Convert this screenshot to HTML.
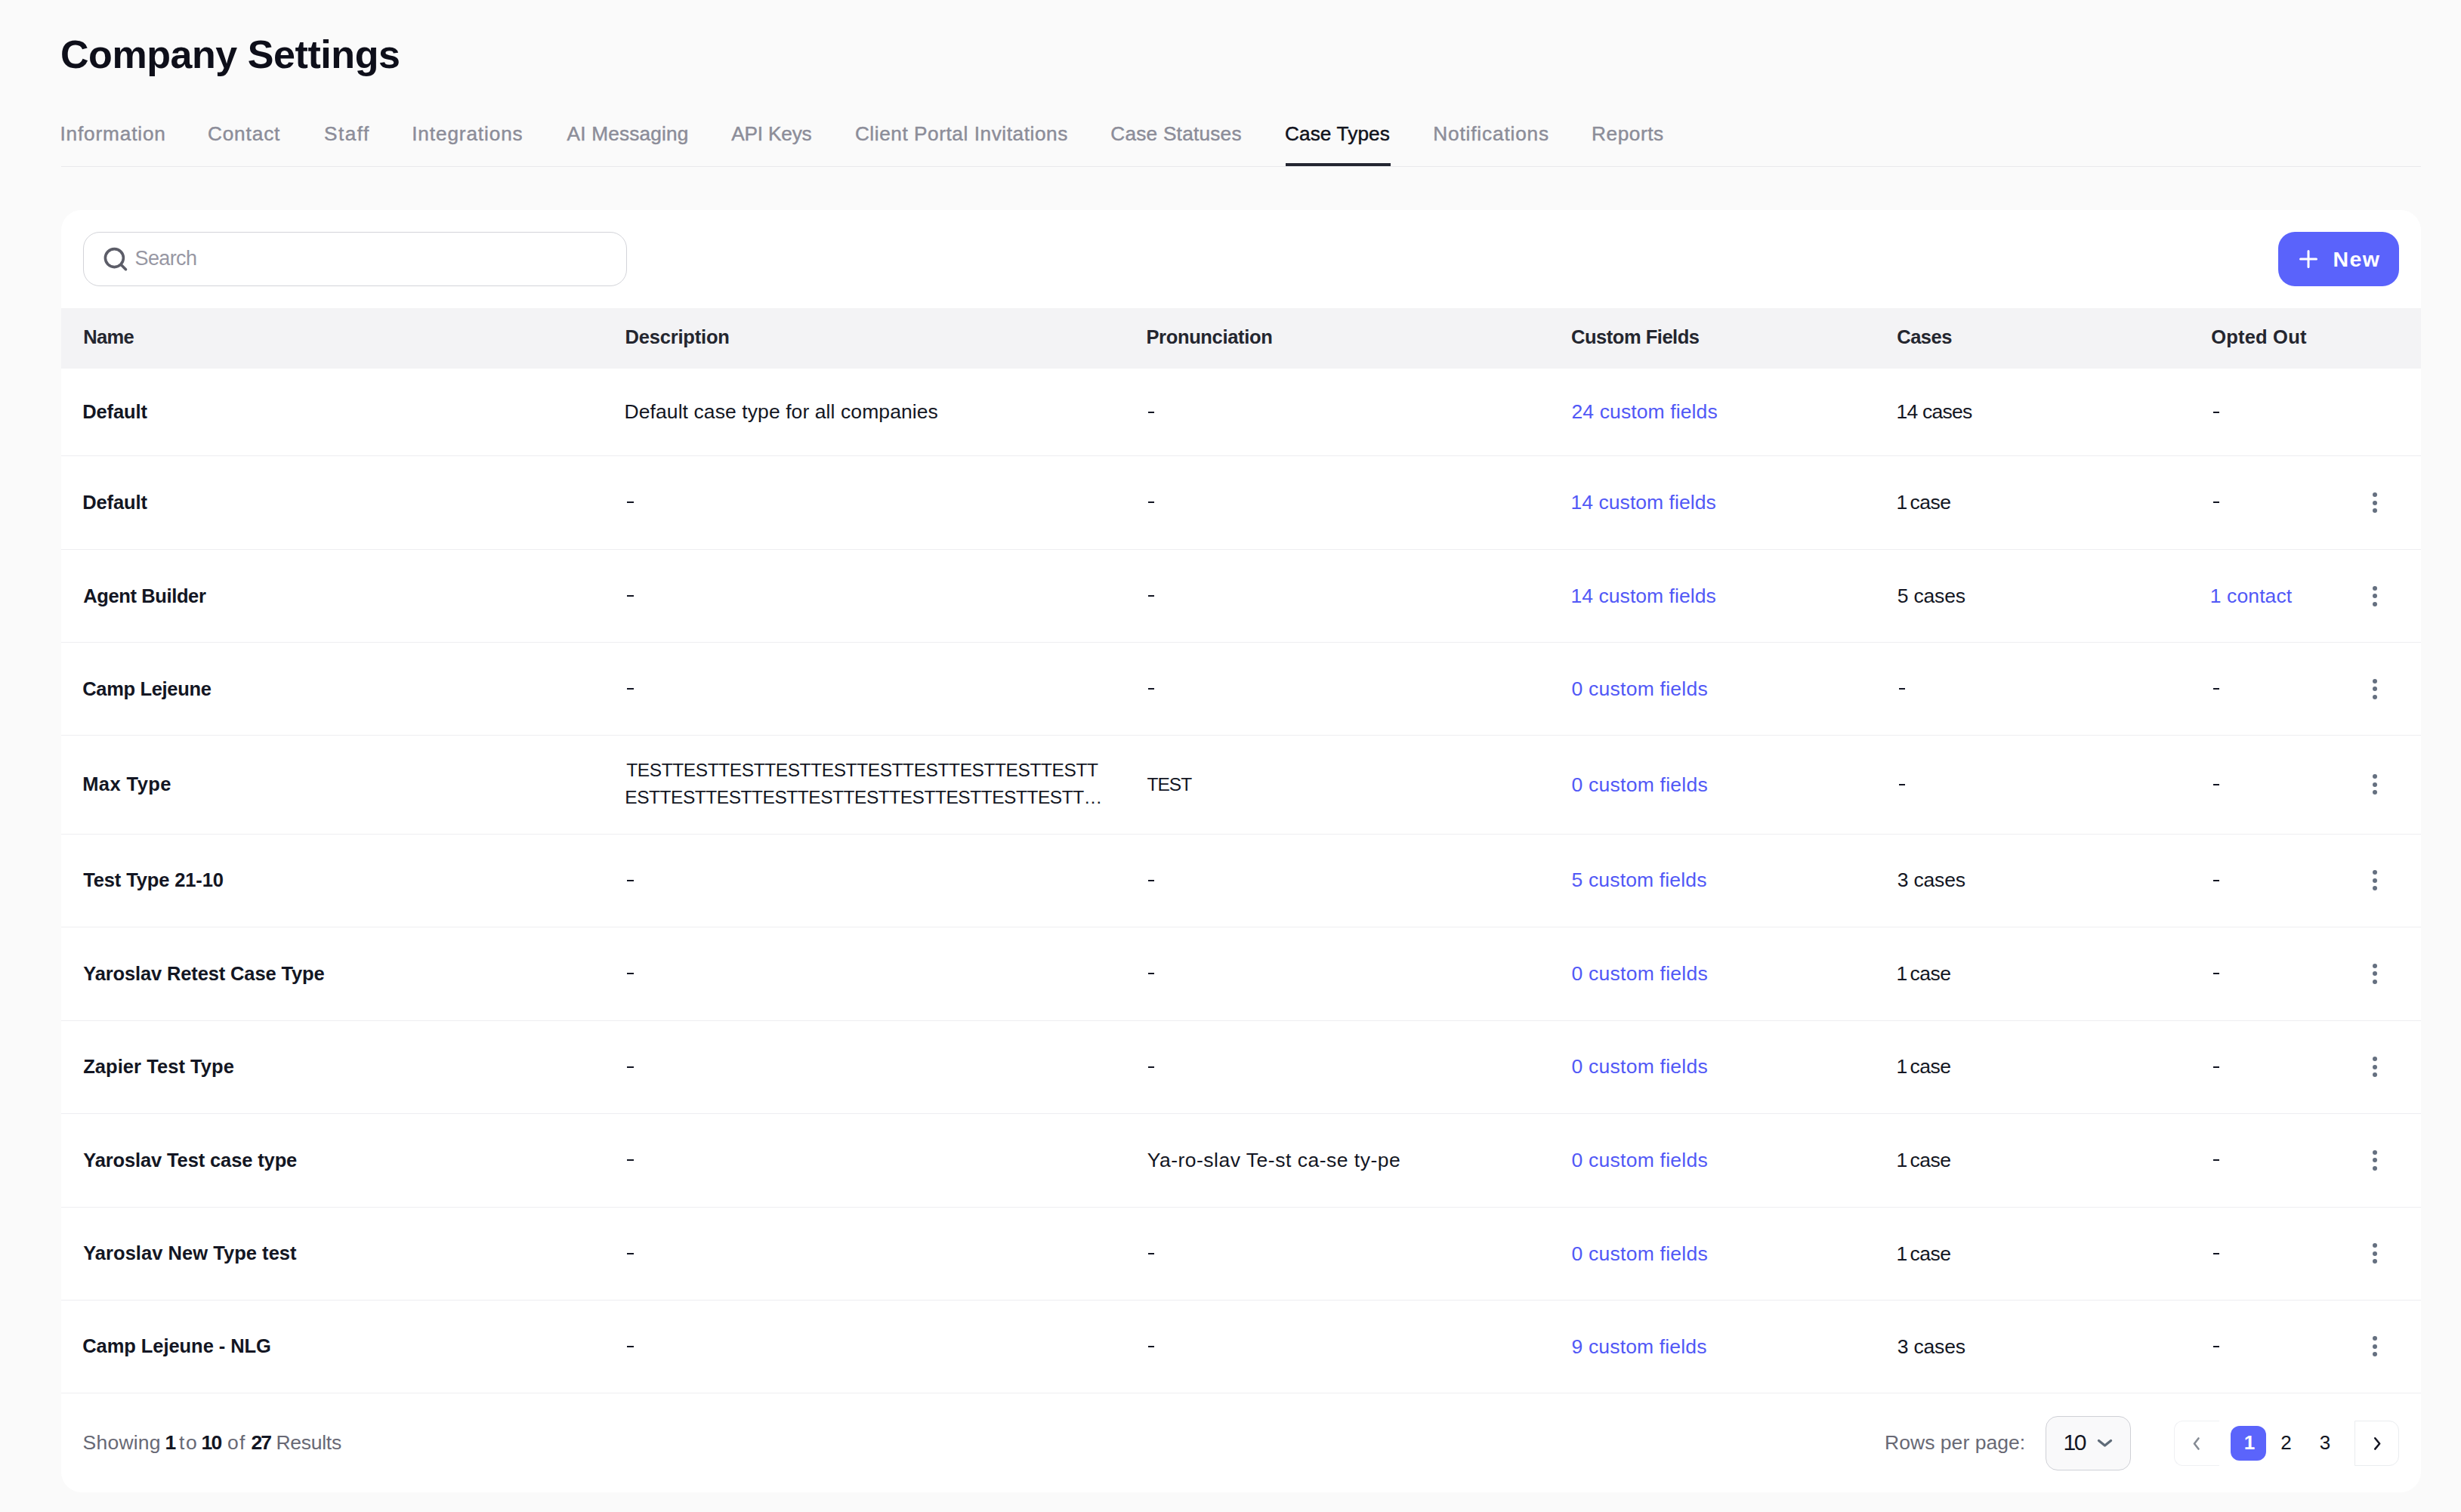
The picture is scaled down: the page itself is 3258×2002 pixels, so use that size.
<!DOCTYPE html>
<html><head><meta charset="utf-8"><title>Company Settings</title>
<style>
html,body{margin:0;padding:0;}
body{width:3258px;height:2002px;background:#fafafa;position:relative;overflow:hidden;font-family:"Liberation Sans", sans-serif;}
.t{position:absolute;white-space:nowrap;}
</style></head><body>
<div style="position:absolute;left:81px;top:220px;width:3124px;height:1px;background:#e9e9ec"></div>
<div style="position:absolute;left:1702px;top:216px;width:139px;height:4px;background:#232631"></div>
<div style="position:absolute;left:81px;top:278px;width:3124px;height:1698px;background:#fff;border-radius:27px;"></div>
<div style="position:absolute;left:110px;top:307px;width:718px;height:70px;border:1px solid #d3d4d9;border-radius:22px;background:#fff"></div>
<svg style="position:absolute;left:136px;top:326px" width="34" height="34" viewBox="0 0 34 34"><circle cx="15.4" cy="15.6" r="12" fill="none" stroke="#5c5d68" stroke-width="3.6"/><line x1="24.5" y1="24.7" x2="30.5" y2="30.7" stroke="#5c5d68" stroke-width="3.6" stroke-linecap="round"/></svg>
<div style="position:absolute;left:3016px;top:307px;width:160px;height:72px;border-radius:22px;background:#5a63fb"></div>
<svg style="position:absolute;left:3044px;top:331px" width="24" height="24" viewBox="0 0 24 24"><path d="M12 1.5V22.5M1.5 12H22.5" stroke="#fff" stroke-width="3" stroke-linecap="round"/></svg>
<div style="position:absolute;left:81px;top:408px;width:3124px;height:80px;background:#f3f3f5"></div>
<div style="position:absolute;left:1519.5px;top:544.6px;width:8.5px;height:2px;background:#131623"></div>
<div style="position:absolute;left:2930px;top:544.6px;width:8px;height:2px;background:#131623"></div>
<div style="position:absolute;left:81px;top:602.9px;width:3124px;height:1px;background:#eeeef1"></div>
<div style="position:absolute;left:830px;top:664.4px;width:8.5px;height:2px;background:#131623"></div>
<div style="position:absolute;left:1519.5px;top:664.4px;width:8.5px;height:2px;background:#131623"></div>
<div style="position:absolute;left:2930px;top:664.4px;width:8px;height:2px;background:#131623"></div>
<div style="position:absolute;left:3141px;top:652.0px;width:6px;height:6px;border-radius:3px;background:#657080"></div>
<div style="position:absolute;left:3141px;top:662.5px;width:6px;height:6px;border-radius:3px;background:#657080"></div>
<div style="position:absolute;left:3141px;top:672.9px;width:6px;height:6px;border-radius:3px;background:#657080"></div>
<div style="position:absolute;left:81px;top:727.0px;width:3124px;height:1px;background:#eeeef1"></div>
<div style="position:absolute;left:830px;top:787.9px;width:8.5px;height:2px;background:#131623"></div>
<div style="position:absolute;left:1519.5px;top:787.9px;width:8.5px;height:2px;background:#131623"></div>
<div style="position:absolute;left:3141px;top:775.6px;width:6px;height:6px;border-radius:3px;background:#657080"></div>
<div style="position:absolute;left:3141px;top:786.0px;width:6px;height:6px;border-radius:3px;background:#657080"></div>
<div style="position:absolute;left:3141px;top:796.5px;width:6px;height:6px;border-radius:3px;background:#657080"></div>
<div style="position:absolute;left:81px;top:850.1px;width:3124px;height:1px;background:#eeeef1"></div>
<div style="position:absolute;left:830px;top:910.9px;width:8.5px;height:2px;background:#131623"></div>
<div style="position:absolute;left:1519.5px;top:910.9px;width:8.5px;height:2px;background:#131623"></div>
<div style="position:absolute;left:2513.8px;top:910.9px;width:8.5px;height:2px;background:#131623"></div>
<div style="position:absolute;left:2930px;top:910.9px;width:8px;height:2px;background:#131623"></div>
<div style="position:absolute;left:3141px;top:898.6px;width:6px;height:6px;border-radius:3px;background:#657080"></div>
<div style="position:absolute;left:3141px;top:909.0px;width:6px;height:6px;border-radius:3px;background:#657080"></div>
<div style="position:absolute;left:3141px;top:919.5px;width:6px;height:6px;border-radius:3px;background:#657080"></div>
<div style="position:absolute;left:81px;top:973.0px;width:3124px;height:1px;background:#eeeef1"></div>
<div style="position:absolute;left:2513.8px;top:1037.8px;width:8.5px;height:2px;background:#131623"></div>
<div style="position:absolute;left:2930px;top:1037.8px;width:8px;height:2px;background:#131623"></div>
<div style="position:absolute;left:3141px;top:1025.4px;width:6px;height:6px;border-radius:3px;background:#657080"></div>
<div style="position:absolute;left:3141px;top:1035.8px;width:6px;height:6px;border-radius:3px;background:#657080"></div>
<div style="position:absolute;left:3141px;top:1046.3px;width:6px;height:6px;border-radius:3px;background:#657080"></div>
<div style="position:absolute;left:81px;top:1103.7px;width:3124px;height:1px;background:#eeeef1"></div>
<div style="position:absolute;left:830px;top:1164.7px;width:8.5px;height:2px;background:#131623"></div>
<div style="position:absolute;left:1519.5px;top:1164.7px;width:8.5px;height:2px;background:#131623"></div>
<div style="position:absolute;left:2930px;top:1164.7px;width:8px;height:2px;background:#131623"></div>
<div style="position:absolute;left:3141px;top:1152.3px;width:6px;height:6px;border-radius:3px;background:#657080"></div>
<div style="position:absolute;left:3141px;top:1162.8px;width:6px;height:6px;border-radius:3px;background:#657080"></div>
<div style="position:absolute;left:3141px;top:1173.2px;width:6px;height:6px;border-radius:3px;background:#657080"></div>
<div style="position:absolute;left:81px;top:1226.8px;width:3124px;height:1px;background:#eeeef1"></div>
<div style="position:absolute;left:830px;top:1288.2px;width:8.5px;height:2px;background:#131623"></div>
<div style="position:absolute;left:1519.5px;top:1288.2px;width:8.5px;height:2px;background:#131623"></div>
<div style="position:absolute;left:2930px;top:1288.2px;width:8px;height:2px;background:#131623"></div>
<div style="position:absolute;left:3141px;top:1275.8px;width:6px;height:6px;border-radius:3px;background:#657080"></div>
<div style="position:absolute;left:3141px;top:1286.3px;width:6px;height:6px;border-radius:3px;background:#657080"></div>
<div style="position:absolute;left:3141px;top:1296.8px;width:6px;height:6px;border-radius:3px;background:#657080"></div>
<div style="position:absolute;left:81px;top:1350.8px;width:3124px;height:1px;background:#eeeef1"></div>
<div style="position:absolute;left:830px;top:1411.6px;width:8.5px;height:2px;background:#131623"></div>
<div style="position:absolute;left:1519.5px;top:1411.6px;width:8.5px;height:2px;background:#131623"></div>
<div style="position:absolute;left:2930px;top:1411.6px;width:8px;height:2px;background:#131623"></div>
<div style="position:absolute;left:3141px;top:1399.2px;width:6px;height:6px;border-radius:3px;background:#657080"></div>
<div style="position:absolute;left:3141px;top:1409.7px;width:6px;height:6px;border-radius:3px;background:#657080"></div>
<div style="position:absolute;left:3141px;top:1420.1px;width:6px;height:6px;border-radius:3px;background:#657080"></div>
<div style="position:absolute;left:81px;top:1473.6px;width:3124px;height:1px;background:#eeeef1"></div>
<div style="position:absolute;left:830px;top:1535.1px;width:8.5px;height:2px;background:#131623"></div>
<div style="position:absolute;left:2930px;top:1535.1px;width:8px;height:2px;background:#131623"></div>
<div style="position:absolute;left:3141px;top:1522.7px;width:6px;height:6px;border-radius:3px;background:#657080"></div>
<div style="position:absolute;left:3141px;top:1533.2px;width:6px;height:6px;border-radius:3px;background:#657080"></div>
<div style="position:absolute;left:3141px;top:1543.6px;width:6px;height:6px;border-radius:3px;background:#657080"></div>
<div style="position:absolute;left:81px;top:1597.7px;width:3124px;height:1px;background:#eeeef1"></div>
<div style="position:absolute;left:830px;top:1658.8px;width:8.5px;height:2px;background:#131623"></div>
<div style="position:absolute;left:1519.5px;top:1658.8px;width:8.5px;height:2px;background:#131623"></div>
<div style="position:absolute;left:2930px;top:1658.8px;width:8px;height:2px;background:#131623"></div>
<div style="position:absolute;left:3141px;top:1646.4px;width:6px;height:6px;border-radius:3px;background:#657080"></div>
<div style="position:absolute;left:3141px;top:1656.8px;width:6px;height:6px;border-radius:3px;background:#657080"></div>
<div style="position:absolute;left:3141px;top:1667.3px;width:6px;height:6px;border-radius:3px;background:#657080"></div>
<div style="position:absolute;left:81px;top:1721.0px;width:3124px;height:1px;background:#eeeef1"></div>
<div style="position:absolute;left:830px;top:1781.8px;width:8.5px;height:2px;background:#131623"></div>
<div style="position:absolute;left:1519.5px;top:1781.8px;width:8.5px;height:2px;background:#131623"></div>
<div style="position:absolute;left:2930px;top:1781.8px;width:8px;height:2px;background:#131623"></div>
<div style="position:absolute;left:3141px;top:1769.4px;width:6px;height:6px;border-radius:3px;background:#657080"></div>
<div style="position:absolute;left:3141px;top:1779.8px;width:6px;height:6px;border-radius:3px;background:#657080"></div>
<div style="position:absolute;left:3141px;top:1790.3px;width:6px;height:6px;border-radius:3px;background:#657080"></div>
<div style="position:absolute;left:81px;top:1843.7px;width:3124px;height:1px;background:#eeeef1"></div>
<div style="position:absolute;left:2708px;top:1875px;width:111px;height:70px;border:1px solid #cfd0d6;border-radius:16px;background:#f9f9fa"></div>
<svg style="position:absolute;left:2775px;top:1905px" width="22" height="13" viewBox="0 0 22 13"><path d="M3.5 2.5L11.5 9L19.5 2.5" fill="none" stroke="#5f6b78" stroke-width="3.2" stroke-linecap="round" stroke-linejoin="round"/></svg>
<div style="position:absolute;left:2878px;top:1881px;width:59px;height:58px;border:1px solid #eff0f3;border-right:none;border-radius:12px 0 0 12px"></div>
<svg style="position:absolute;left:2900px;top:1901px" width="16" height="21" viewBox="0 0 16 21"><path d="M10.5 3.5L5 10.5L10.5 17.5" fill="none" stroke="#858b94" stroke-width="2.6" stroke-linecap="round" stroke-linejoin="round"/></svg>
<div style="position:absolute;left:2953px;top:1888px;width:47px;height:46px;border-radius:12px;background:#5b64fb"></div>
<div style="position:absolute;left:3117px;top:1881px;width:57px;height:58px;border:1px solid #eaecef;border-radius:0 13px 13px 0"></div>
<svg style="position:absolute;left:3139px;top:1901px" width="16" height="21" viewBox="0 0 16 21"><path d="M5.2 3.3L11.2 10.5L5.2 17.6" fill="none" stroke="#141522" stroke-width="2.5" stroke-linecap="round" stroke-linejoin="round"/></svg>
<div class="t" style="left:80.00px;top:45.98px;font-size:52px;line-height:52px;color:#0e0f1a;font-weight:700;letter-spacing:-0.439px;">Company Settings</div>
<div class="t" style="left:79.50px;top:164.02px;font-size:26.2px;line-height:26.2px;color:#8c8d99;font-weight:400;letter-spacing:0.836px;-webkit-text-stroke:0.45px currentColor;">Information</div>
<div class="t" style="left:274.90px;top:164.02px;font-size:26.2px;line-height:26.2px;color:#8c8d99;font-weight:400;letter-spacing:0.871px;-webkit-text-stroke:0.45px currentColor;">Contact</div>
<div class="t" style="left:429.10px;top:164.02px;font-size:26.2px;line-height:26.2px;color:#8c8d99;font-weight:400;letter-spacing:1.473px;-webkit-text-stroke:0.45px currentColor;">Staff</div>
<div class="t" style="left:545.20px;top:164.02px;font-size:26.2px;line-height:26.2px;color:#8c8d99;font-weight:400;letter-spacing:0.877px;-webkit-text-stroke:0.45px currentColor;">Integrations</div>
<div class="t" style="left:750.60px;top:164.02px;font-size:26.2px;line-height:26.2px;color:#8c8d99;font-weight:400;letter-spacing:0.182px;-webkit-text-stroke:0.45px currentColor;">AI Messaging</div>
<div class="t" style="left:968.20px;top:164.02px;font-size:26.2px;line-height:26.2px;color:#8c8d99;font-weight:400;letter-spacing:-0.173px;-webkit-text-stroke:0.45px currentColor;">API Keys</div>
<div class="t" style="left:1131.90px;top:164.02px;font-size:26.2px;line-height:26.2px;color:#8c8d99;font-weight:400;letter-spacing:0.566px;-webkit-text-stroke:0.45px currentColor;">Client Portal Invitations</div>
<div class="t" style="left:1470.30px;top:164.02px;font-size:26.2px;line-height:26.2px;color:#8c8d99;font-weight:400;letter-spacing:0.240px;-webkit-text-stroke:0.45px currentColor;">Case Statuses</div>
<div class="t" style="left:1700.90px;top:164.02px;font-size:26.2px;line-height:26.2px;color:#11121c;font-weight:400;letter-spacing:0.135px;-webkit-text-stroke:0.45px currentColor;">Case Types</div>
<div class="t" style="left:1897.30px;top:164.02px;font-size:26.2px;line-height:26.2px;color:#8c8d99;font-weight:400;letter-spacing:0.846px;-webkit-text-stroke:0.45px currentColor;">Notifications</div>
<div class="t" style="left:2107.00px;top:164.02px;font-size:26.2px;line-height:26.2px;color:#8c8d99;font-weight:400;letter-spacing:0.583px;-webkit-text-stroke:0.45px currentColor;">Reports</div>
<div class="t" style="left:178.50px;top:328.64px;font-size:27px;line-height:27px;color:#9797a3;font-weight:400;letter-spacing:-0.606px;">Search</div>
<div class="t" style="left:3088.60px;top:328.87px;font-size:28.5px;line-height:28.5px;color:#ffffff;font-weight:700;letter-spacing:1.384px;">New</div>
<div class="t" style="left:110.20px;top:434.41px;font-size:25.5px;line-height:25.5px;color:#24262f;font-weight:700;letter-spacing:-0.690px;">Name</div>
<div class="t" style="left:827.50px;top:434.41px;font-size:25.5px;line-height:25.5px;color:#24262f;font-weight:700;letter-spacing:-0.190px;">Description</div>
<div class="t" style="left:1517.40px;top:434.41px;font-size:25.5px;line-height:25.5px;color:#24262f;font-weight:700;letter-spacing:-0.337px;">Pronunciation</div>
<div class="t" style="left:2080.10px;top:434.41px;font-size:25.5px;line-height:25.5px;color:#24262f;font-weight:700;letter-spacing:-0.484px;">Custom Fields</div>
<div class="t" style="left:2511.30px;top:434.41px;font-size:25.5px;line-height:25.5px;color:#24262f;font-weight:700;letter-spacing:-0.515px;">Cases</div>
<div class="t" style="left:2927.30px;top:434.41px;font-size:25.5px;line-height:25.5px;color:#24262f;font-weight:700;letter-spacing:0.180px;">Opted Out</div>
<div class="t" style="left:109.20px;top:533.26px;font-size:25.5px;line-height:25.5px;color:#131623;font-weight:700;letter-spacing:-0.105px;">Default</div>
<div class="t" style="left:826.50px;top:532.41px;font-size:26.5px;line-height:26.5px;color:#131623;font-weight:400;letter-spacing:0.086px;">Default case type for all companies</div>
<div class="t" style="left:2080.50px;top:532.41px;font-size:26.5px;line-height:26.5px;color:#5158f6;font-weight:400;letter-spacing:0.111px;">24 custom fields</div>
<div class="t" style="left:2510.40px;top:532.41px;font-size:26.5px;line-height:26.5px;color:#131623;font-weight:400;letter-spacing:-0.745px;">14 cases</div>
<div class="t" style="left:109.20px;top:653.01px;font-size:25.5px;line-height:25.5px;color:#131623;font-weight:700;letter-spacing:-0.105px;">Default</div>
<div class="t" style="left:2079.50px;top:652.16px;font-size:26.5px;line-height:26.5px;color:#5158f6;font-weight:400;letter-spacing:0.051px;">14 custom fields</div>
<div class="t" style="left:2510.40px;top:652.16px;font-size:26.5px;line-height:26.5px;color:#131623;font-weight:400;letter-spacing:0.000px;">1</div>
<div class="t" style="left:2528.40px;top:652.16px;font-size:26.5px;line-height:26.5px;color:#131623;font-weight:400;letter-spacing:-0.479px;">case</div>
<div class="t" style="left:110.20px;top:776.61px;font-size:25.5px;line-height:25.5px;color:#131623;font-weight:700;letter-spacing:-0.379px;">Agent Builder</div>
<div class="t" style="left:2079.50px;top:775.76px;font-size:26.5px;line-height:26.5px;color:#5158f6;font-weight:400;letter-spacing:0.051px;">14 custom fields</div>
<div class="t" style="left:2511.80px;top:775.76px;font-size:26.5px;line-height:26.5px;color:#131623;font-weight:400;letter-spacing:-0.196px;">5 cases</div>
<div class="t" style="left:2925.80px;top:775.76px;font-size:26.5px;line-height:26.5px;color:#5158f6;font-weight:400;letter-spacing:0.103px;">1 contact</div>
<div class="t" style="left:109.20px;top:899.61px;font-size:25.5px;line-height:25.5px;color:#131623;font-weight:700;letter-spacing:-0.328px;">Camp Lejeune</div>
<div class="t" style="left:2080.50px;top:898.76px;font-size:26.5px;line-height:26.5px;color:#5158f6;font-weight:400;letter-spacing:0.244px;">0 custom fields</div>
<div class="t" style="left:109.20px;top:1026.41px;font-size:25.5px;line-height:25.5px;color:#131623;font-weight:700;letter-spacing:0.424px;">Max Type</div>
<div class="t" style="left:829.30px;top:1008.26px;font-size:24.5px;line-height:24.5px;color:#131623;font-weight:400;letter-spacing:-0.411px;">TESTTESTTESTTESTTESTTESTTESTTESTTESTTESTT</div>
<div class="t" style="left:827.30px;top:1044.26px;font-size:24.5px;line-height:24.5px;color:#131623;font-weight:400;letter-spacing:-0.468px;">ESTTESTTESTTESTTESTTESTTESTTESTTESTTESTT…</div>
<div class="t" style="left:1518.50px;top:1027.25px;font-size:24.5px;line-height:24.5px;color:#131623;font-weight:400;letter-spacing:-0.983px;">TEST</div>
<div class="t" style="left:2080.50px;top:1025.56px;font-size:26.5px;line-height:26.5px;color:#5158f6;font-weight:400;letter-spacing:0.244px;">0 custom fields</div>
<div class="t" style="left:110.20px;top:1153.31px;font-size:25.5px;line-height:25.5px;color:#131623;font-weight:700;letter-spacing:-0.126px;">Test Type 21-10</div>
<div class="t" style="left:2080.50px;top:1152.46px;font-size:26.5px;line-height:26.5px;color:#5158f6;font-weight:400;letter-spacing:0.158px;">5 custom fields</div>
<div class="t" style="left:2511.80px;top:1152.46px;font-size:26.5px;line-height:26.5px;color:#131623;font-weight:400;letter-spacing:-0.196px;">3 cases</div>
<div class="t" style="left:110.20px;top:1276.86px;font-size:25.5px;line-height:25.5px;color:#131623;font-weight:700;letter-spacing:-0.134px;">Yaroslav Retest Case Type</div>
<div class="t" style="left:2080.50px;top:1276.01px;font-size:26.5px;line-height:26.5px;color:#5158f6;font-weight:400;letter-spacing:0.244px;">0 custom fields</div>
<div class="t" style="left:2510.40px;top:1276.01px;font-size:26.5px;line-height:26.5px;color:#131623;font-weight:400;letter-spacing:0.000px;">1</div>
<div class="t" style="left:2528.40px;top:1276.01px;font-size:26.5px;line-height:26.5px;color:#131623;font-weight:400;letter-spacing:-0.479px;">case</div>
<div class="t" style="left:110.20px;top:1400.26px;font-size:25.5px;line-height:25.5px;color:#131623;font-weight:700;letter-spacing:0.055px;">Zapier Test Type</div>
<div class="t" style="left:2080.50px;top:1399.41px;font-size:26.5px;line-height:26.5px;color:#5158f6;font-weight:400;letter-spacing:0.244px;">0 custom fields</div>
<div class="t" style="left:2510.40px;top:1399.41px;font-size:26.5px;line-height:26.5px;color:#131623;font-weight:400;letter-spacing:0.000px;">1</div>
<div class="t" style="left:2528.40px;top:1399.41px;font-size:26.5px;line-height:26.5px;color:#131623;font-weight:400;letter-spacing:-0.479px;">case</div>
<div class="t" style="left:110.20px;top:1523.71px;font-size:25.5px;line-height:25.5px;color:#131623;font-weight:700;letter-spacing:-0.127px;">Yaroslav Test case type</div>
<div class="t" style="left:1518.70px;top:1522.86px;font-size:26.5px;line-height:26.5px;color:#131623;font-weight:400;letter-spacing:0.501px;">Ya-ro-slav Te-st ca-se ty-pe</div>
<div class="t" style="left:2080.50px;top:1522.86px;font-size:26.5px;line-height:26.5px;color:#5158f6;font-weight:400;letter-spacing:0.244px;">0 custom fields</div>
<div class="t" style="left:2510.40px;top:1522.86px;font-size:26.5px;line-height:26.5px;color:#131623;font-weight:400;letter-spacing:0.000px;">1</div>
<div class="t" style="left:2528.40px;top:1522.86px;font-size:26.5px;line-height:26.5px;color:#131623;font-weight:400;letter-spacing:-0.479px;">case</div>
<div class="t" style="left:110.20px;top:1647.41px;font-size:25.5px;line-height:25.5px;color:#131623;font-weight:700;letter-spacing:0.039px;">Yaroslav New Type test</div>
<div class="t" style="left:2080.50px;top:1646.56px;font-size:26.5px;line-height:26.5px;color:#5158f6;font-weight:400;letter-spacing:0.244px;">0 custom fields</div>
<div class="t" style="left:2510.40px;top:1646.56px;font-size:26.5px;line-height:26.5px;color:#131623;font-weight:400;letter-spacing:0.000px;">1</div>
<div class="t" style="left:2528.40px;top:1646.56px;font-size:26.5px;line-height:26.5px;color:#131623;font-weight:400;letter-spacing:-0.479px;">case</div>
<div class="t" style="left:109.20px;top:1770.41px;font-size:25.5px;line-height:25.5px;color:#131623;font-weight:700;letter-spacing:-0.061px;">Camp Lejeune - NLG</div>
<div class="t" style="left:2080.50px;top:1769.56px;font-size:26.5px;line-height:26.5px;color:#5158f6;font-weight:400;letter-spacing:0.158px;">9 custom fields</div>
<div class="t" style="left:2511.80px;top:1769.56px;font-size:26.5px;line-height:26.5px;color:#131623;font-weight:400;letter-spacing:-0.196px;">3 cases</div>
<div class="t" style="left:109.60px;top:1896.77px;font-size:26.5px;line-height:26.5px;color:#686975;font-weight:400;letter-spacing:0.214px;">Showing</div>
<div class="t" style="left:218.50px;top:1896.77px;font-size:26.5px;line-height:26.5px;color:#131623;font-weight:700;letter-spacing:0.000px;">1</div>
<div class="t" style="left:237.00px;top:1896.77px;font-size:26.5px;line-height:26.5px;color:#686975;font-weight:400;letter-spacing:1.737px;">to</div>
<div class="t" style="left:266.40px;top:1896.77px;font-size:26.5px;line-height:26.5px;color:#131623;font-weight:700;letter-spacing:-1.738px;">10</div>
<div class="t" style="left:301.00px;top:1896.77px;font-size:26.5px;line-height:26.5px;color:#686975;font-weight:400;letter-spacing:1.362px;">of</div>
<div class="t" style="left:332.40px;top:1896.77px;font-size:26.5px;line-height:26.5px;color:#131623;font-weight:700;letter-spacing:-1.938px;">27</div>
<div class="t" style="left:365.40px;top:1896.77px;font-size:26.5px;line-height:26.5px;color:#686975;font-weight:400;letter-spacing:-0.269px;">Results</div>
<div class="t" style="left:2495.00px;top:1896.77px;font-size:26.5px;line-height:26.5px;color:#686975;font-weight:400;letter-spacing:0.043px;">Rows per page:</div>
<div class="t" style="left:2731.60px;top:1894.81px;font-size:30px;line-height:30px;color:#131623;font-weight:400;letter-spacing:-2.485px;">10</div>
<div class="t" style="left:2970.70px;top:1897.09px;font-size:26px;line-height:26px;color:#ffffff;font-weight:700;letter-spacing:0.000px;">1</div>
<div class="t" style="left:3019.30px;top:1897.09px;font-size:26px;line-height:26px;color:#131623;font-weight:400;letter-spacing:0.000px;">2</div>
<div class="t" style="left:3070.70px;top:1897.09px;font-size:26px;line-height:26px;color:#131623;font-weight:400;letter-spacing:0.000px;">3</div>
</body></html>
